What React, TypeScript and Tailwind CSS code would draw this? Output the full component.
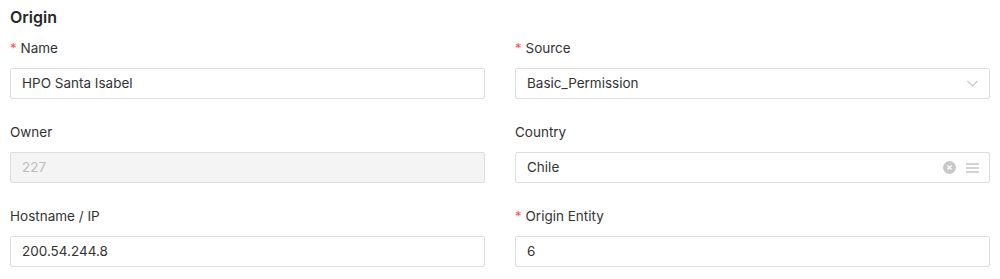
import React from 'react'

// ─── Field pieces ────────────────────────────────────────────

function Label({ text, required }: { text: string; required?: boolean }) {
  return (
    <div className="h-[22px] mb-[9px] flex items-center text-[13.5px] text-[#333333]">
      {required && <span className="text-[#ff4d4f] mr-[4px] text-[13px] leading-none">*</span>}
      <span>{text}</span>
    </div>
  )
}

function Chevron() {
  return (
    <svg width="11" height="7" viewBox="0 0 11 7" fill="none" className="text-[#c4c4c4]">
      <path d="M0.5 1 L5.5 6 L10.5 1" stroke="currentColor" strokeWidth="1.1" />
    </svg>
  )
}

function ClearIcon() {
  return (
    <svg width="13" height="13" viewBox="0 0 14 14">
      <circle cx="7" cy="7" r="7" fill="#c8c8c8" />
      <path d="M4.8 4.8 L9.2 9.2 M9.2 4.8 L4.8 9.2" stroke="#fff" strokeWidth="1.4" />
    </svg>
  )
}

function ListIcon() {
  return (
    <svg width="13" height="10" viewBox="0 0 13 10" className="text-[#c4c4c4]">
      <path d="M0 1 H13 M0 5 H13 M0 9 H13" stroke="currentColor" strokeWidth="1.3" />
    </svg>
  )
}

interface FieldProps {
  label: string
  value: string
  required?: boolean
  disabled?: boolean
  kind?: 'input' | 'select' | 'multi'
}

function Field({ label, value, required, disabled, kind = 'input' }: FieldProps) {
  return (
    <div className="mb-[22px]">
      <Label text={label} required={required} />
      <div
        className={`h-[31px] border border-[#dedede] rounded-[2px] pl-[11px] pr-[10px] flex items-center text-[13.5px] ${
          disabled ? 'bg-[#f4f4f4] text-[#bcbcbc]' : 'bg-white text-[#333333]'
        }`}
      >
        <span className="flex-1 truncate">{value}</span>
        {kind === 'select' && <span className="mr-[1px] flex"><Chevron /></span>}
        {kind === 'multi' && (
          <span className="flex items-center gap-[10px]">
            <ClearIcon />
            <ListIcon />
          </span>
        )}
      </div>
    </div>
  )
}

// ─── Page ────────────────────────────────────────────────────

export default function App() {
  return (
    <div className="bg-white w-[1000px] h-[279px] px-[10px] pt-[6px] font-['Inter','Noto_Sans',sans-serif]">
      <h2 className="h-[22px] mb-[9px] flex items-center text-[16px] font-semibold text-[#262626]">Origin</h2>
      <div className="grid grid-cols-2 gap-x-[30px]">
        <Field label="Name" value="HPO Santa Isabel" required />
        <Field label="Source" value="Basic_Permission" required kind="select" />
        <Field label="Owner" value="227" disabled />
        <Field label="Country" value="Chile" kind="multi" />
        <Field label="Hostname / IP" value="200.54.244.8" />
        <Field label="Origin Entity" value="6" required />
      </div>
    </div>
  )
}
